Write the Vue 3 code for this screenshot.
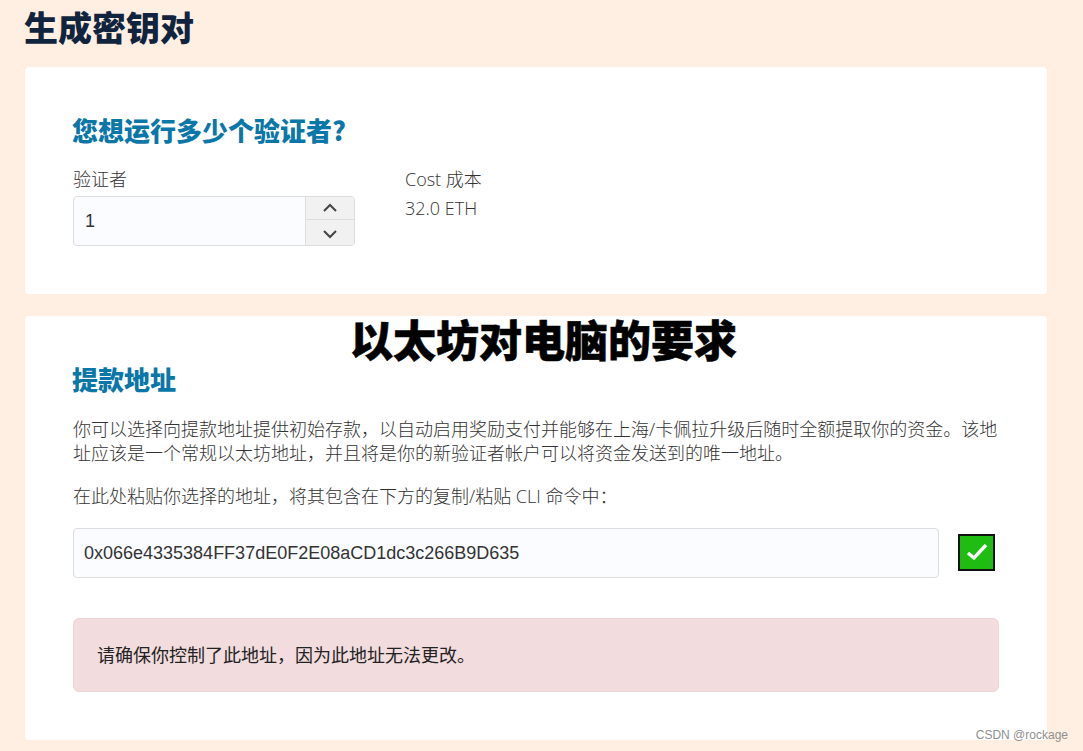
<template>
  <div class="page">
    <h1 class="title">生成密钥对</h1>

    <section class="card first">
      <h2 class="subtitle">您想运行多少个验证者?</h2>
      <div class="counter-row">
        <div class="counter-col">
          <label class="label">验证者</label>
          <div class="spinner">
            <div class="spinner-value">{{ validators }}</div>
            <div class="spinner-btns">
              <button class="spin-btn">
                <svg width="16" height="10" viewBox="0 0 16 10"><path d="M2 8 L8 2 L14 8" fill="none" stroke="#444" stroke-width="2" /></svg>
              </button>
              <button class="spin-btn">
                <svg width="16" height="10" viewBox="0 0 16 10"><path d="M2 2 L8 8 L14 2" fill="none" stroke="#444" stroke-width="2" /></svg>
              </button>
            </div>
          </div>
        </div>
        <div class="cost-col">
          <div class="label">Cost 成本</div>
          <div class="cost">{{ cost }} ETH</div>
        </div>
      </div>
    </section>

    <section class="card second">
      <div class="overlay-title">以太坊对电脑的要求</div>
      <h2 class="subtitle">提款地址</h2>
      <p class="text">你可以选择向提款地址提供初始存款，以自动启用奖励支付并能够在上海/卡佩拉升级后随时全额提取你的资金。该地址应该是一个常规以太坊地址，并且将是你的新验证者帐户可以将资金发送到的唯一地址。</p>
      <p class="text paste">在此处粘贴你选择的地址，将其包含在下方的复制/粘贴 CLI 命令中：</p>
      <div class="address-row">
        <div class="address">{{ address }}</div>
        <div class="check">
          <svg width="24" height="20" viewBox="0 0 24 20"><path d="M3 11 L9 16 L21 3" fill="none" stroke="#fff" stroke-width="3.4" /></svg>
        </div>
      </div>
      <div class="alert">请确保你控制了此地址，因为此地址无法更改。</div>
    </section>

    <div class="watermark">CSDN @rockage</div>
  </div>
</template>

<script setup>
import { ref, computed } from 'vue'

const validators = ref(1)
const cost = computed(() => (validators.value * 32).toFixed(1))
const address = ref('0x066e4335384FF37dE0F2E08aCD1dc3c266B9D635')
</script>

<style>
html, body {
  margin: 0;
  background: #ffefe2;
}
</style>

<style scoped>
.page {
  position: relative;
  height: 751px;
  overflow: hidden;
  box-sizing: border-box;
  padding: 0 36px 0 25px;
  background: #ffefe2;
  font-family: "Open Sans", "Noto Sans CJK SC", sans-serif;
  color: #333;
}
.title {
  margin: 0 0 0 -1px;
  height: 67px;
  padding-top: 7px;
  box-sizing: border-box;
  font-family: "Noto Sans CJK SC", sans-serif;
  font-size: 34px;
  line-height: 40px;
  font-weight: 900;
  color: #10243e;
}
.card {
  position: relative;
  background: #fff;
  border-radius: 4px;
  padding: 0 48px;
}
.first {
  height: 227px;
  margin-bottom: 22px;
  padding-top: 43px;
  box-sizing: border-box;
}
.second {
  height: 424px;
  padding-top: 43px;
  box-sizing: border-box;
}
.subtitle {
  margin: 0 0 0 -1px;
  font-family: "Noto Sans CJK SC", sans-serif;
  font-size: 26px;
  line-height: 40px;
  font-weight: 900;
  color: #0b76a8;
}
.counter-row {
  display: flex;
  margin-top: 15px;
}
.counter-col {
  width: 332px;
}
.label {
  font-size: 18px;
  line-height: 29px;
  font-weight: 300;
  color: #333;
  display: block;
}
.cost {
  font-size: 18px;
  line-height: 29px;
  font-weight: 300;
  color: #333;
}
.spinner {
  display: flex;
  width: 282px;
  height: 50px;
  margin-top: 2px;
  box-sizing: border-box;
  border: 1px solid #ddd;
  border-radius: 4px;
  background: #fbfcff;
  overflow: hidden;
}
.spinner-value {
  flex: 1;
  padding-left: 11px;
  line-height: 48px;
  font-family: "Liberation Sans", sans-serif;
  font-size: 18px;
  color: #333;
}
.spinner-btns {
  width: 48px;
  display: flex;
  flex-direction: column;
  border-left: 1px solid #ddd;
}
.spin-btn {
  flex: 1;
  padding: 0;
  border: 0;
  background: #f1f1f1;
  display: flex;
  align-items: center;
  justify-content: center;
}
.spin-btn + .spin-btn {
  border-top: 1px solid #ddd;
  padding-top: 3px;
}
.overlay-title {
  position: absolute;
  left: 325px;
  top: -1px;
  font-family: "Noto Sans CJK SC", sans-serif;
  font-size: 43px;
  line-height: 46px;
  font-weight: 900;
  color: #000;
  -webkit-text-stroke: 0.6px #000;
  white-space: nowrap;
}
.text {
  margin: 18px 0 0;
  font-size: 18px;
  line-height: 24px;
  font-weight: 300;
  color: #333;
}
.paste {
  margin-top: 19px;
}
.address-row {
  display: flex;
  align-items: center;
  margin-top: 20px;
}
.address {
  flex: 1;
  height: 50px;
  box-sizing: border-box;
  border: 1px solid #ddd;
  border-radius: 4px;
  background: #fbfcff;
  padding-left: 10px;
  line-height: 48px;
  font-family: "Liberation Sans", sans-serif;
  font-size: 18px;
  color: #333;
}
.check {
  width: 37px;
  height: 37px;
  box-sizing: border-box;
  margin: 0 4px 2px 19px;
  border: 2px solid #111;
  background: #1fbd12;
  display: flex;
  align-items: center;
  justify-content: center;
}
.alert {
  margin-top: 40px;
  height: 74px;
  box-sizing: border-box;
  border: 1px solid #ecd5d9;
  border-radius: 6px;
  background: #f2dcde;
  padding-left: 24px;
  text-indent: -1px;
  line-height: 72px;
  font-size: 18px;
  color: #222;
}
.watermark {
  position: absolute;
  right: 15px;
  top: 727px;
  font-family: "Liberation Sans", sans-serif;
  font-size: 12px;
  line-height: 16px;
  color: #8f8f8f;
}
</style>
